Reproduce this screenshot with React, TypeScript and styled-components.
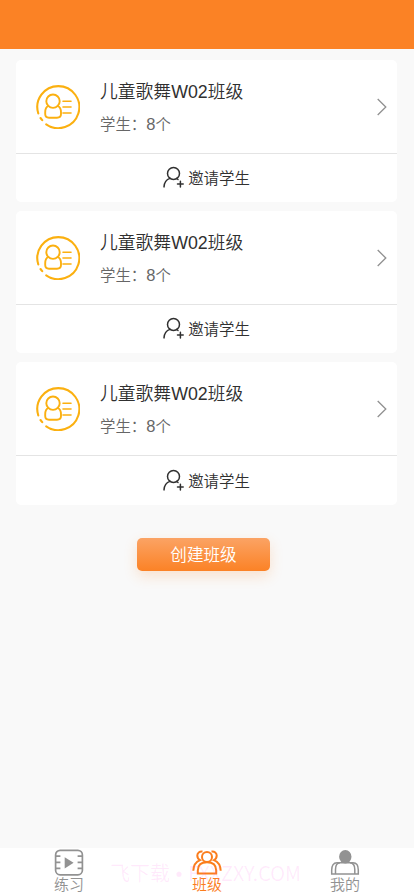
import React from "react";
import styled, { createGlobalStyle } from "styled-components";

const Global = createGlobalStyle`
  * { box-sizing: border-box; }
  body { margin: 0; background: #f9f9f9; font-family: "Liberation Sans", "Noto Sans CJK SC", sans-serif; }
  svg { display: block; fill: none; flex: none; }
`;
const Screen = styled.div`
  height: 896px;
  display: flex;
  flex-direction: column;
  overflow: hidden;
`;
const Header = styled.header`
  height: 49px;
  flex: none;
  background: #fb8225;
`;
const Main = styled.main`
  flex: 1;
  padding: 10.6px 17px 0 16px;
  display: flex;
  flex-direction: column;
  align-items: center;
`;
const List = styled.div`
  width: 100%;
  display: flex;
  flex-direction: column;
  gap: 8.7px;
`;
const Card = styled.section`
  height: 142.6px;
  background: #fff;
  border-radius: 5px;
`;
const Info = styled.div`
  height: 94px;
  border-bottom: 1px solid #e4e4e4;
  display: flex;
  align-items: center;
  padding: 1px 10px 0 20px;
`;
const Texts = styled.div`
  flex: 1;
  margin-left: 20px;
  padding-top: 3px;
`;
const Name = styled.div`
  font-size: 17.8px;
  line-height: 24px;
  color: #303030;
  font-weight: 350;
`;
const Count = styled.div`
  margin-top: 8px;
  font-size: 15.4px;
  line-height: 24px;
  color: #666;
  font-weight: 350;
`;
const Digits = styled.span`
  font-size: 16.5px;
`;
const Invite = styled.div`
  height: 48px;
  display: flex;
  align-items: center;
  justify-content: center;
  gap: 4px;
  padding-bottom: 1px;
  font-size: 15.4px;
  font-weight: 350;
  color: #303030;
`;
const Create = styled.button`
  margin: 33px 6px 0 0;
  width: 133px;
  height: 33px;
  border: 0;
  padding: 0;
  border-radius: 5px;
  background: linear-gradient(#fba364, #fb8226);
  box-shadow: 0 5px 14px rgba(251, 130, 37, 0.2);
  color: #fff;
  font: 350 16.6px/33px "Noto Sans CJK SC", sans-serif;
`;
const Tabs = styled.nav`
  position: relative;
  height: 48px;
  flex: none;
  background: #fff;
  display: grid;
  grid-template-columns: repeat(3, 1fr);
`;
const Tab = styled.div<{ $active?: boolean }>`
  display: flex;
  flex-direction: column;
  align-items: center;
  color: ${(p) => (p.$active ? "#fb7d1d" : "#929292")};
  font: 350 15px/14px "Noto Sans CJK SC", sans-serif;
`;
const Watermark = styled.div`
  position: absolute;
  left: 110px;
  top: 11px;
  font: 350 20px/28px "Noto Sans CJK SC", sans-serif;
  white-space: pre;
  color: rgba(255, 80, 230, 0.12);
`;
const Dot = styled.span`
  font-family: "Liberation Sans", sans-serif;
`;

const ClassIcon = () => (
  <svg width="44" height="44" viewBox="0 0 44 44" stroke="#fbb010" strokeWidth="2.1" strokeLinecap="round">
    <path d="M10.2 39.3A21 21 0 1 0 2.3 28.5M4.5 33L6.2 35.2" />
    <circle cx="17" cy="16.2" r="6.7" strokeWidth="1.9" />
    <path d="M12.3 21C10 22 9.2 24 9.2 27.2V29Q9.2 32.7 13 32.7H21Q25 32.7 25 29V27.2C25 24 24 22 21.7 21" strokeWidth="1.9" />
    <path d="M27 16.3H35M27 22H35M27 28H35" strokeWidth="1.6" />
  </svg>
);
const Chevron = () => (
  <svg width="10" height="18" viewBox="0 0 10 18" stroke="#909090" strokeWidth="1.3">
    <path d="M.7 1L8.8 9L.7 17" />
  </svg>
);
const AddUser = () => (
  <svg width="21" height="22" viewBox="0 0 21 22" stroke="#303030" strokeWidth="1.5" strokeLinecap="round">
    <circle cx="10.5" cy="7.4" r="6" />
    <path d="M1 20.9C1.3 16.3 3.5 13.5 7 12.4M13.5 12.5L15 13.5M14.5 18H20.2M17.4 15.2V20.9" />
  </svg>
);
const FilmIcon = () => (
  <svg width="30" height="29" viewBox="0 0 30 29" stroke="#929292" strokeWidth="1.7">
    <rect x="1.6" y="2.4" width="26.8" height="24.4" rx="4.5" />
    <path d="M2 8.2H6.4M2 14.3H6.4M2 20.4H6.4M23.6 8.2H28M23.6 14.3H28M23.6 20.4H28" />
    <path d="M10.7 9.2V20.4L19.6 14.8Z" fill="#929292" stroke="none" />
  </svg>
);
const GroupIcon = () => (
  <svg width="30" height="29" viewBox="0 0 30 29" stroke="#fb7d1d" strokeWidth="2">
    <circle cx="15" cy="8.9" r="5" />
    <path d="M5.8 25.4V22.5C5.8 17 9.5 14.3 15 14.3C20.5 14.3 24.2 17 24.2 22.5V25.4Z" />
    <path d="M10.5 3.6C7.4 3.2 5.3 5 5.3 7.6C5.3 9.8 6.3 11.2 8 12.2C3.7 14 1.5 17.2 1.3 22.7M19.5 3.6C22.6 3.2 24.7 5 24.7 7.6C24.7 9.8 23.7 11.2 22 12.2C26.3 14 28.5 17.2 28.7 22.7" />
  </svg>
);
const MeIcon = () => (
  <svg width="30" height="29" viewBox="0 0 30 29" stroke="#929292" strokeWidth="1.5">
    <ellipse cx="15.3" cy="8.7" rx="6.2" ry="6.7" fill="#929292" stroke="none" />
    <path d="M10 14.8H7C3.2 14.8 1.7 18 1.7 22V26H28.3V22C28.3 18 26.8 14.8 23 14.8H20" />
    <path d="M5.5 26V21.5C5.5 17.5 7 15 10 14.8H20C23 15 24.8 17.5 24.8 21.5V26" />
  </svg>
);

const classes = ["儿童歌舞W02班级", "儿童歌舞W02班级", "儿童歌舞W02班级"];

export default function App() {
  return (
    <Screen>
      <Global />
      <Header />
      <Main>
        <List>
          {classes.map((name, i) => (
            <Card key={i}>
              <Info>
                <ClassIcon />
                <Texts>
                  <Name>{name}</Name>
                  <Count>学生：<Digits>8</Digits>个</Count>
                </Texts>
                <Chevron />
              </Info>
              <Invite><AddUser />邀请学生</Invite>
            </Card>
          ))}
        </List>
        <Create>创建班级</Create>
      </Main>
      <Tabs>
        <Tab><FilmIcon />练习</Tab>
        <Tab $active><GroupIcon />班级</Tab>
        <Tab><MeIcon />我的</Tab>
        <Watermark>飞下载<Dot> • </Dot>FXXZXY.COM</Watermark>
      </Tabs>
    </Screen>
  );
}
